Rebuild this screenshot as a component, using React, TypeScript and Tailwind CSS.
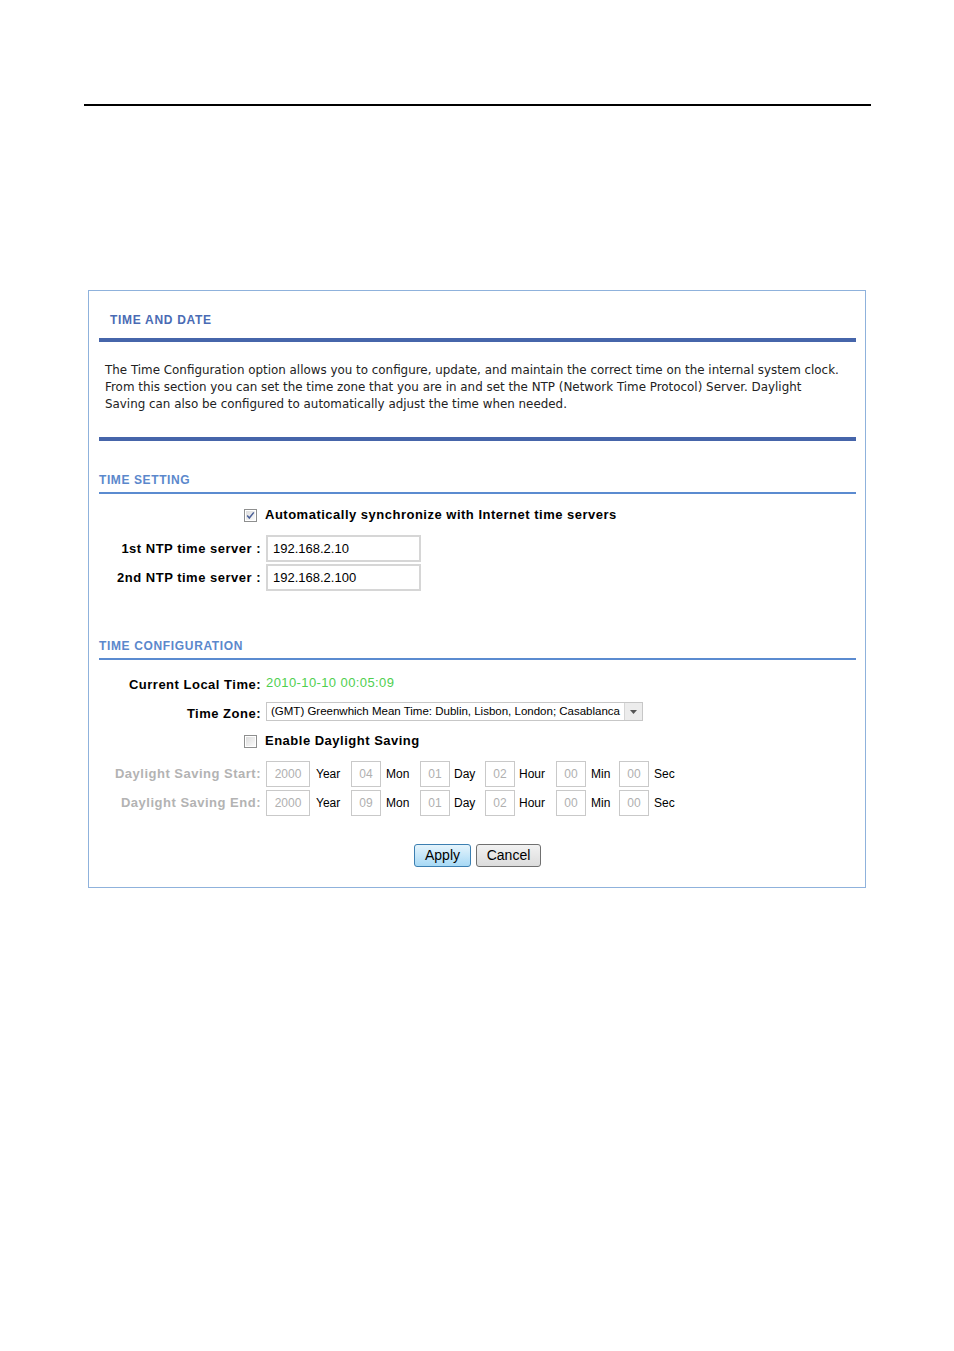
import type { ReactNode } from 'react';

const sans = { fontFamily: '"Liberation Sans", Arial, sans-serif' };
const tahomaLike = { fontFamily: '"DejaVu Sans", Verdana, sans-serif' };

function CheckBox({ checked }: { checked?: boolean }) {
  return (
    <svg width="13" height="13" viewBox="0 0 13 13" className="block">
      <defs>
        <linearGradient id={checked ? 'cbOn' : 'cbOff'} x1="0" y1="0" x2="1" y2="1">
          <stop offset="0" stopColor="#dcdcdc" />
          <stop offset="1" stopColor="#fbfbfb" />
        </linearGradient>
      </defs>
      <rect x="0.5" y="0.5" width="12" height="12" fill="#fff" stroke="#8e8f8f" />
      <rect x="2" y="2" width="9" height="9" fill={`url(#${checked ? 'cbOn' : 'cbOff'})`} />
      {checked && <path d="M3.2 6.6 L5.3 9 L9.8 3.4" fill="none" stroke="#4a5f97" strokeWidth="1.5" />}
    </svg>
  );
}

function SectionHead({ title, track }: { title: string; track: string }) {
  return (
    <div>
      <div className={`text-[12px] leading-[16px] font-bold text-[#5b88cc] ${track}`}>{title}</div>
      <div className="mt-[4px] h-[2px] bg-[#5b8bd0]" />
    </div>
  );
}

function Row({ label, children, muted, className }: { label: string; children: ReactNode; muted?: boolean; className?: string }) {
  return (
    <div className={`flex items-center ${className ?? ''}`}>
      <div className={`w-[162px] shrink-0 text-right text-[13px] font-bold tracking-[0.5px] ${muted ? 'text-[#b3b3b3]' : 'text-black'}`}>{label}</div>
      <div className="ml-[5px] flex items-center">{children}</div>
    </div>
  );
}

function SmallBox({ value, w }: { value: string; w: string }) {
  return (
    <div className={`${w} h-[26px] border border-[#c9c9c9] flex items-center justify-center text-[12px] text-[#b0b0b0]`}>{value}</div>
  );
}

function DateRow({ label, mon }: { label: string; mon: string }) {
  return (
    <Row label={label} muted>
      <SmallBox value="2000" w="w-[44px]" />
      <span className="w-[41px] pl-[6px] text-[12px]">Year</span>
      <SmallBox value={mon} w="w-[30px]" />
      <span className="w-[39px] pl-[5px] text-[12px]">Mon</span>
      <SmallBox value="01" w="w-[30px]" />
      <span className="w-[35px] pl-[4px] text-[12px]">Day</span>
      <SmallBox value="02" w="w-[30px]" />
      <span className="w-[41px] pl-[4px] text-[12px]">Hour</span>
      <SmallBox value="00" w="w-[30px]" />
      <span className="w-[33px] pl-[5px] text-[12px]">Min</span>
      <SmallBox value="00" w="w-[30px]" />
      <span className="pl-[5px] text-[12px]">Sec</span>
    </Row>
  );
}

export default function App() {
  return (
    <div className="bg-white min-h-[1351px] pt-[104px]" style={sans}>
      <div className="ml-[84px] w-[787px] h-[2px] bg-black" />

      <div className="ml-[88px] mt-[184px] w-[778px] border border-[#8fb2dc] pl-[10px] pr-[9px] pt-[21px] pb-[20px]">
        <div className="pl-[11px] text-[12px] leading-[16px] font-bold tracking-[0.7px] text-[#4a6bb4]">TIME AND DATE</div>
        <div className="mt-[10px] h-[4px] bg-[#4665aa]" />
        <p className="mt-[20px] px-[6px] text-[11.9px] leading-[17px] text-[#222] whitespace-nowrap" style={tahomaLike}>
          The Time Configuration option allows you to configure, update, and maintain the correct time on the internal system clock.
          <br />
          From this section you can set the time zone that you are in and set the NTP (Network Time Protocol) Server. Daylight
          <br />
          Saving can also be configured to automatically adjust the time when needed.
        </p>
        <div className="mt-[24px] h-[4px] bg-[#4665aa]" />

        <div className="mt-[31px]">
          <SectionHead title="TIME SETTING" track="tracking-[0.6px]" />
        </div>
        <div className="mt-[11px] flex items-center h-[20px]">
          <div className="w-[158px] flex justify-end">
            <CheckBox checked />
          </div>
          <span className="ml-[8px] text-[13px] font-bold tracking-[0.5px]">Automatically synchronize with Internet time servers</span>
        </div>
        <Row label="1st NTP time server :" className="mt-[10px]">
          <div className="w-[155px] h-[27px] border-2 border-[#d6d6d6] flex items-center pl-[5px] text-[13px]">192.168.2.10</div>
        </Row>
        <Row label="2nd NTP time server :" className="mt-[2px]">
          <div className="w-[155px] h-[27px] border-2 border-[#d6d6d6] flex items-center pl-[5px] text-[13px]">192.168.2.100</div>
        </Row>

        <div className="mt-[47px]">
          <SectionHead title="TIME CONFIGURATION" track="tracking-[0.65px]" />
        </div>
        <div className="mt-[14px] flex items-end h-[18px]">
          <div className="w-[162px] text-right text-[13px] font-bold tracking-[0.5px] leading-[16px] translate-y-[1px]">Current Local Time:</div>
          <span className="ml-[5px] text-[13px] leading-[18px] tracking-[0.4px] text-[#4fcf4f] self-start">2010-10-10 00:05:09</span>
        </div>
        <div className="mt-[10px] flex items-end">
          <div className="w-[162px] text-right text-[13px] font-bold tracking-[0.5px] leading-[16px] translate-y-[1px]">Time Zone:</div>
          <div className="ml-[5px] flex h-[19px] border border-[#c7c7c7]">
            <span className="pl-[4px] pr-[4px] text-[11.5px] leading-[17px] text-black">(GMT) Greenwhich Mean Time: Dublin, Lisbon, London; Casablanca</span>
            <span className="w-[18px] border-l border-[#d6d6d6] bg-[#ececec] flex items-center justify-center">
              <svg width="7" height="4" viewBox="0 0 7 4"><path d="M0 0 H7 L3.5 4 Z" fill="#555" /></svg>
            </span>
          </div>
        </div>
        <div className="mt-[11px] flex items-center h-[18px]">
          <div className="w-[158px] flex justify-end">
            <CheckBox />
          </div>
          <span className="ml-[8px] text-[13px] font-bold tracking-[0.5px]">Enable Daylight Saving</span>
        </div>
        <div className="mt-[11px]">
          <DateRow label="Daylight Saving Start:" mon="04" />
        </div>
        <div className="mt-[3px]">
          <DateRow label="Daylight Saving End:" mon="09" />
        </div>

        <div className="mt-[28px] flex justify-center gap-[5px]">
          <button className="w-[57px] h-[23px] rounded-[3px] border border-[#3c7fb1] bg-gradient-to-b from-[#e5f4fc] to-[#a7d9f5] text-[14px] text-black">Apply</button>
          <button className="w-[65px] h-[23px] rounded-[3px] border border-[#707070] bg-gradient-to-b from-[#f2f2f2] to-[#dcdcdc] text-[14px] text-black">Cancel</button>
        </div>
      </div>
    </div>
  );
}
